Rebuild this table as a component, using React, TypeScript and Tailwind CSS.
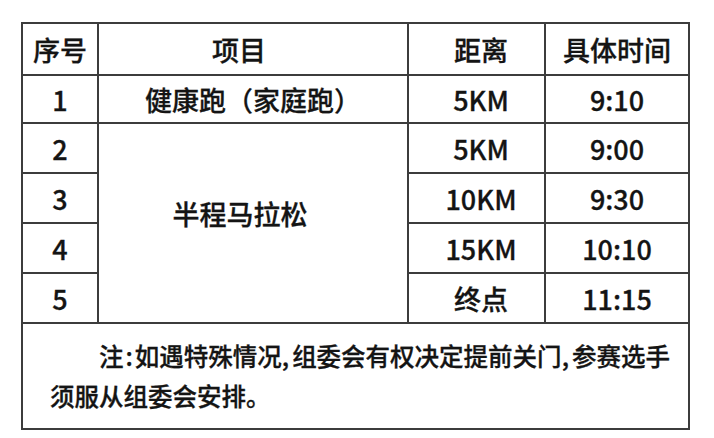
import React from "react";

const rows = [
  { no: "1", dist: "5KM", time: "9:10" },
  { no: "2", dist: "5KM", time: "9:00" },
  { no: "3", dist: "10KM", time: "9:30" },
  { no: "4", dist: "15KM", time: "10:10" },
  { no: "5", dist: "终点", time: "11:15" },
];

const line = "border-2 border-[#3c3c3c]";
const cell = `${line} text-center align-middle p-0`;
const distCell = `${line} text-center align-middle py-0 pl-[9px] pr-0`;

export default function App() {
  return (
    <div
      className="min-h-[438px] w-[714px] bg-white pl-[21px] pt-[22px] text-[#141414] [-webkit-text-stroke:0.3px_#141414]"
      style={{ fontFamily: '"Noto Sans CJK SC", "Noto Sans", sans-serif' }}
    >
      <table className="w-[667px] table-fixed border-collapse text-[27px] font-medium leading-none">
        <colgroup>
          <col className="w-[76px]" />
          <col className="w-[310px]" />
          <col className="w-[137px]" />
          <col className="w-[144px]" />
        </colgroup>
        <tbody>
          <tr className="h-[52px]">
            <td className={cell}>序号</td>
            <td className={`${line} py-0 pl-0 pr-[28px] text-center align-middle`}>项目</td>
            <td className={distCell}>距离</td>
            <td className={cell}>具体时间</td>
          </tr>
          {rows.map((r, i) => (
            <tr key={r.no} className={i === 0 ? "h-[48px]" : "h-[50px]"}>
              <td className={cell}>{r.no}</td>
              {i === 0 && <td className={cell}>健康跑（家庭跑）</td>}
              {i === 1 && (
                <td className={`${line} pl-0 pr-[26px] pt-0 pb-[20px] text-center align-middle`} rowSpan={4}>
                  半程马拉松
                </td>
              )}
              <td className={distCell}>{r.dist}</td>
              <td className={cell}>{r.time}</td>
            </tr>
          ))}
          <tr className="h-[100px]">
            <td colSpan={4} className={`${line} py-[12px] pl-[27px] pr-[12px] text-left align-middle text-[24.5px] leading-[40px]`}>
              <p className="indent-[2em]">
                注<span className="mx-[2px]">:</span>如遇特殊情况<span className="mr-[3px]">,</span>组委会有权决定提前关门<span className="mr-[3px]">,</span>参赛选手须服从组委会安排。
              </p>
            </td>
          </tr>
        </tbody>
      </table>
    </div>
  );
}
